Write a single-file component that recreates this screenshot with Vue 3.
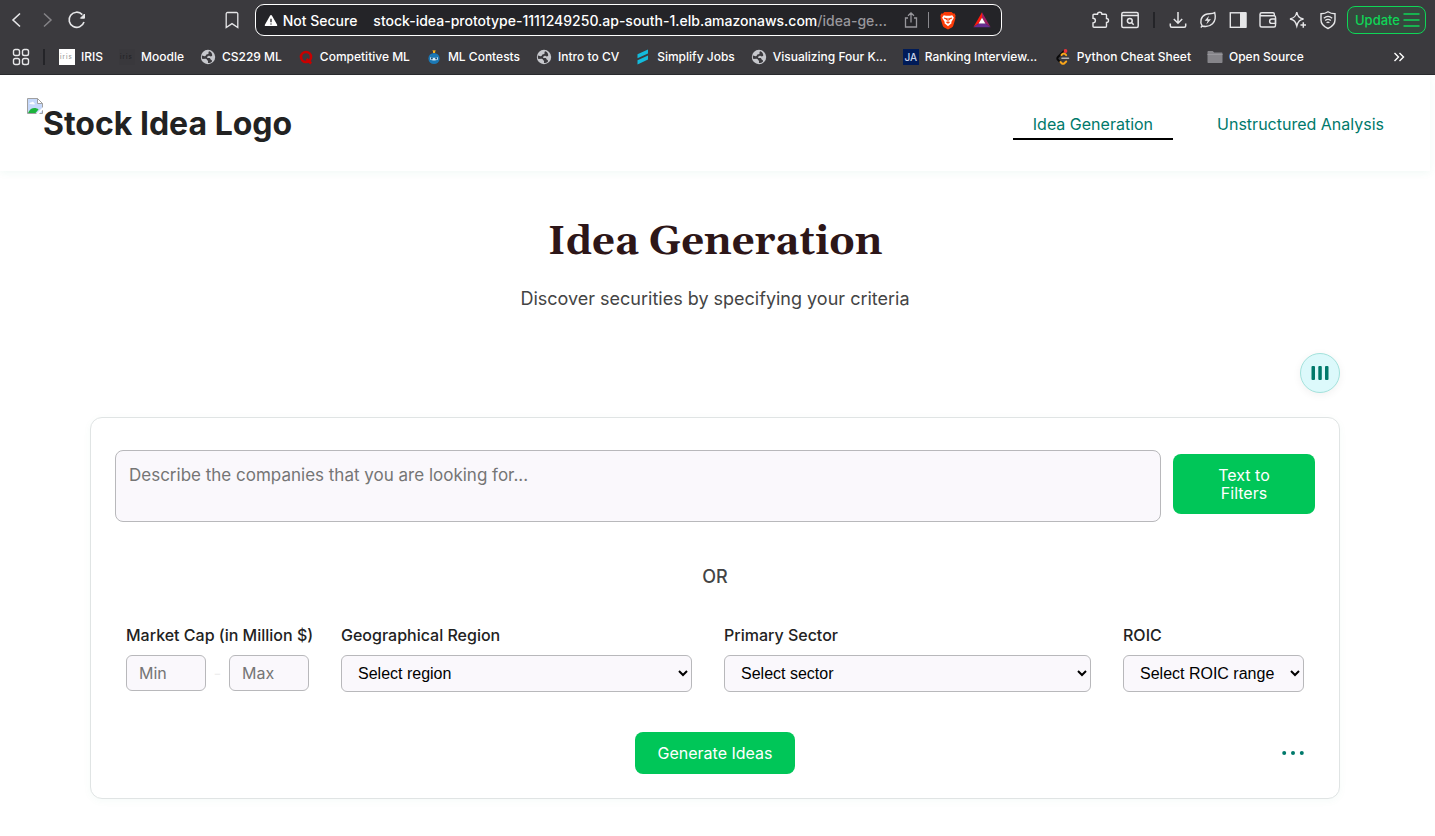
<script setup>
import { ref } from 'vue'

const bookmarks = [
  { icon: 'iris', label: 'IRIS' },
  { icon: 'moodle', label: 'Moodle' },
  { icon: 'globe', label: 'CS229 ML' },
  { icon: 'ring', label: 'Competitive ML' },
  { icon: 'robot', label: 'ML Contests' },
  { icon: 'globe', label: 'Intro to CV' },
  { icon: 'simplify', label: 'Simplify Jobs' },
  { icon: 'globe', label: 'Visualizing Four K...', cut: true },
  { icon: 'ja', label: 'Ranking Interview...', cut: true },
  { icon: 'code', label: 'Python Cheat Sheet' },
  { icon: 'folder', label: 'Open Source' },
]

const description = ref('')
const min = ref('')
const max = ref('')
const region = ref('')
const sector = ref('')
const roic = ref('')
</script>

<template>
  <div class="window">
    <div class="chrome">
      <div class="toolbar">
        <button class="tool" aria-label="Back">
          <svg viewBox="0 0 20 20"><path d="M13 3.5 6 10l7 6.5" stroke-width="1.6" /></svg>
        </button>
        <button class="tool dim" aria-label="Forward">
          <svg viewBox="0 0 20 20"><path d="m7 3.5 7 6.5-7 6.5" stroke-width="1.5" /></svg>
        </button>
        <button class="tool" aria-label="Reload">
          <svg viewBox="0 0 20 20"><path d="M15.300 4.600A7.600 7.600 0 1 0 17 12" stroke-width="1.6" /><path d="M17.500 4v4.200h-4z" fill="currentColor" /></svg>
        </button>
        <span class="space-left"></span>
        <button class="tool" aria-label="Bookmark this tab">
          <svg viewBox="0 0 20 20"><path d="M5.5 2.5h9a1.3 1.3 0 0 1 1.3 1.3v13.700L10 13.6l-5.800 3.900V3.800a1.300 1.300 0 0 1 1.300-1.300z" stroke-width="1.300" /></svg>
        </button>
        <div class="address">
          <svg class="warn" viewBox="0 0 16 14"><path d="M8 .8c.5 0 .8.200 1 .6l6 10.400c.4.800 0 1.500-.9 1.500H1.900c-.9 0-1.300-.7-.9-1.500L7 1.400c.2-.4.500-.6 1-.6z" fill="#fff" /><path d="M8 5v4M8 10.400v1.300" stroke="#242428" stroke-width="1.500" /></svg>
          <span class="secure">Not Secure</span>
          <span class="url">stock-idea-prototype-1111249250.ap-south-1.elb.amazonaws.com<i>/idea-ge...</i></span>
          <button class="tool share" aria-label="Share">
            <svg viewBox="0 0 20 20"><path d="M7 8H4.500v9h11V8H13M10 12.500V3M7 5.700 10 2.800l3 2.900" stroke-width="1.300" /></svg>
          </button>
          <span class="bar"></span>
          <svg class="brave" viewBox="0 0 18 20"><path d="M5.200 1h7.600l1.600 1.700 1.700-.2 1 2.700-.6 1.200.4 1.300-2.300 7.600c-.3 1-.8 1.600-1.600 2.100L9 19.500l-4-2.100c-.8-.5-1.300-1.100-1.600-2.100L1.100 7.700l.4-1.300-.6-1.200 1-2.700 1.700.2z" fill="#fb3b08" /><path d="m4.500 4.500 2.500.6h4l2.500-.6 1.700 2.700-2.700 4.400.2 1.400L9 16l-3.700-3 .2-1.400-2.700-4.400z" fill="#fff" /><path d="m4.800 7.400 2.900.9-.6 1.300M13.200 7.400l-2.900.9.6 1.300M9 8v3.200m-1.700.3L9 12.600l1.700-1.100" fill="none" stroke="#fb3b08" stroke-width="1.200" /></svg>
          <svg class="bat" viewBox="0 0 18 16"><path d="M9 .3V6l-3.200 5.300L.4 15.300z" fill="#ff1a0d" /><path d="M9 .3V6l3.200 5.300 5.400 4z" fill="#9e1f63" /><path d="m.4 15.300 5.400-4h6.400l5.400 4z" fill="#662d91" /><path d="m9 5.800 3.400 5.600H5.600z" fill="#fff" /></svg>
        </div>
        <span class="space-right"></span>
        <button class="tool" aria-label="Extensions">
          <svg viewBox="0 0 20 20"><path d="M7.500 4.200c0-1.200 1-2 2.200-2s2.200.8 2.200 2h3.600c.6 0 1 .4 1 1v3.300c1.200 0 2 .9 2 2s-.8 2-2 2v3.700c0 .6-.4 1-1 1H4c-.6 0-1-.4-1-1v-3.300c1.500-.1 2.400-1 2.400-2.300S4.500 8.300 3 8.300V5.200c0-.6.400-1 1-1z" stroke-width="1.400" /></svg>
        </button>
        <button class="tool" aria-label="Search in page">
          <svg viewBox="0 0 20 20"><rect x="1.800" y="2.500" width="16.400" height="15" rx="1.500" stroke-width="1.500" /><path d="M2 5.500h16M11.700 12.700l2 2" stroke-width="1.500" /><circle cx="9.800" cy="10.800" r="2.400" stroke-width="1.500" /></svg>
        </button>
        <span class="split"></span>
        <button class="tool" aria-label="Downloads">
          <svg viewBox="0 0 20 20"><path d="M10 2v11M5.800 9l4.200 4.200L14.200 9M2.300 13.500v2.300c0 .9.600 1.500 1.500 1.500h12.400c.9 0 1.500-.6 1.500-1.500v-2.300" stroke-width="1.500" /></svg>
        </button>
        <button class="tool" aria-label="Energy saver">
          <svg viewBox="0 0 20 20"><path d="M4.200 16C1.500 12 2.800 6.500 7.500 4.500c3-1.200 6.500-.2 9.200-1.800.9 3.500.7 8.300-2.200 11-3 2.900-7.600 3-10.300 2.300zm0 0-1.400 1.500" stroke-width="1.400" /><path d="m11 5.800-4.300 5h3l-1.400 3.700 4.700-5.200H9.900z" fill="currentColor" stroke="none" /></svg>
        </button>
        <button class="tool" aria-label="Sidebar">
          <svg viewBox="0 0 20 20"><rect x="2.300" y="2.800" width="15.500" height="14.500" stroke-width="1.400" /><path d="M12.500 2.800h5.500v14.500h-5.500z" fill="currentColor" /></svg>
        </button>
        <button class="tool" aria-label="Wallet">
          <svg viewBox="0 0 20 20"><path d="M16.300 5.700V4c0-.8-.5-1.300-1.300-1.300H3.800C2.600 2.700 2 3.400 2 4.300s.6 1.500 1.700 1.500h12.500c.8 0 1.300.5 1.300 1.300v8.400c0 .9-.5 1.500-1.500 1.500H3.800c-1.100 0-1.800-.7-1.800-1.800V4.300" stroke-width="1.400" /><path d="M17.500 9h-3.700a2.200 2.200 0 0 0 0 4.400h3.700z" stroke-width="1.400" /></svg>
        </button>
        <button class="tool" aria-label="Assistant">
          <svg viewBox="0 0 20 20"><path d="M8.800 2.200c.9 4.300 2.200 5.800 6.700 6.800-3.800.9-5.400 1.900-6.700 7.100C7.600 11.700 6.500 10 2 9c4.500-1 5.900-2.700 6.800-6.800z" stroke-width="1.400" /><path d="M15.300 12.300v5.500M12.500 15h5.500" stroke-width="1.500" /></svg>
        </button>
        <button class="tool" aria-label="VPN">
          <svg viewBox="0 0 20 20"><path d="M10 1.800c2.300 1.600 4.600 2 7 2V10c0 4-2.800 6.700-7 8.500C5.800 16.700 3 14 3 10V3.800c2.500 0 4.800-.4 7-2z" stroke-width="1.400" /><path d="M5.800 8.200c2.500-2.100 5.900-2.100 8.400 0M7.200 10.500c1.700-1.400 3.900-1.400 5.600 0M8.600 12.700c.9-.7 1.900-.7 2.800 0" stroke-width="1.300" /></svg>
        </button>
        <button class="update">Update
          <svg viewBox="0 0 17 16"><path d="M.5 2h16M.5 8h16M.5 14h16" stroke="currentColor" stroke-width="1.500" /></svg>
        </button>
      </div>

      <div class="bookmarks">
        <button class="apps" aria-label="All apps">
          <svg viewBox="0 0 18 18"><g fill="none" stroke="#e6e6e8" stroke-width="1.400"><rect x="1.500" y="1.500" width="6" height="6" rx="1.800" /><rect x="10.500" y="1.500" width="6" height="6" rx="1.800" /><rect x="1.500" y="10.500" width="6" height="6" rx="1.800" /><rect x="10.500" y="10.500" width="6" height="6" rx="1.800" /></g></svg>
        </button>
        <span class="split"></span>
        <a v-for="b in bookmarks" :key="b.label" href="#" class="bookmark">
          <svg viewBox="0 0 16 16">
            <template v-if="b.icon === 'iris'">
              <rect width="16" height="16" fill="#fff" /><text x="1" y="10" font-size="6" letter-spacing="1" fill="#999">iris</text>
            </template>
            <template v-else-if="b.icon === 'moodle'">
              <rect width="16" height="16" fill="#39383c" /><text x="1" y="10" font-size="6" letter-spacing="1" fill="#222226">iris</text>
            </template>
            <template v-else-if="b.icon === 'globe'">
              <circle cx="8" cy="8" r="7.200" fill="#c6c7cc" /><path d="M9.500 2.200c-1 .3-1.200.9-.9 1.700.3.900-.9 1.100-1.700 1.300C5.700 5.500 6 7.500 4.600 7.300L2 6.500c-.4 1.500 0 2.600.4 3.600l3.100-.3c1.600-.1 1.200 1.400 2.100 1.700 1 .3.100 1.600.4 2.500 1.600 0 3-.5 4-1.600.1-1-.3-1.500-1-1.700-.9-.3-.5-1.300-1.400-1.600-.9-.4-2.200.2-2.500-.7-.2-.8.6-1.300 1.300-1.500 1-.2 1.500.7 2.600.6l1.200-.8c.3-1.800-1-3.800-2.700-4.500z" fill="#3b3a3e" />
            </template>
            <template v-else-if="b.icon === 'ring'">
              <circle cx="8" cy="8" r="5" fill="none" stroke="#c80000" stroke-width="2.600" /><path d="m8.500 10 4.700 4.500" stroke="#c80000" stroke-width="2.500" />
            </template>
            <template v-else-if="b.icon === 'robot'">
              <path d="M7 2.500 6.500 1 8 1.600l1.500-.7L9 4H7z" fill="#f5b21c" /><circle cx="8" cy="9.500" r="5.600" fill="#1b78b5" /><path d="M4 8.200c2.500.8 5.500.8 8 0v2.300c-2.500 1.200-5.500 1.200-8 0z" fill="#d4edfa" /><circle cx="5.800" cy="9.500" r="1" fill="#164b73" /><circle cx="10.200" cy="9.500" r="1" fill="#164b73" />
            </template>
            <template v-else-if="b.icon === 'simplify'">
              <path d="M2.500 5.200 13 .6v4L2.500 9.300zM2.500 11.200 13 6.500v4L2.500 15.600z" fill="#13bbdc" />
            </template>
            <template v-else-if="b.icon === 'ja'">
              <rect width="16" height="16" fill="#001b58" /><text x="1.500" y="11.500" font-size="10" fill="#c9d2e8">JA</text>
            </template>
            <template v-else-if="b.icon === 'code'">
              <g fill="none" stroke-width="2" stroke-linecap="round"><path d="M8.800 2.300 3 8c-.9.900-.9 2 0 2.900l1.500 1.500" stroke="#09090a" /><path d="m5.500 13 1.200 1.200c.8.800 1.900.8 2.700 0l1.800-1.700M6.500 6l1-.9c.9-.8 1.900-.8 2.700 0l1 1" stroke="#f8a51b" /><path d="M7 9.200h6.500" stroke="#b3b3b3" stroke-width="1.600" /></g><circle cx="10.500" cy="2" r="1.900" fill="#e8333a" />
            </template>
            <template v-else>
              <path d="M.5 3c0-.7.300-1 1-1h4.200l1.500 1.400H14.500c.7 0 1 .4 1 1v8.500c0 .7-.4 1-1 1h-13c-.7 0-1-.3-1-1z" fill="#86858a" /><path d="M.5 5h15v1H.5z" fill="#98979c" />
            </template>
          </svg>
          <span :class="{ cut: b.cut }">{{ b.label }}</span>
        </a>
        <button class="more" aria-label="More bookmarks">
          <svg viewBox="0 0 12 12"><path d="m1.500 2 4 4-4 4M6.500 2l4 4-4 4" fill="none" stroke="#fff" stroke-width="1.400" /></svg>
        </button>
      </div>
    </div>

    <div class="page">
      <header class="header">
        <a href="#" class="logo">
          <svg viewBox="0 0 16 16"><path d="M.5.500h10l5 5v10H.5z" fill="#c6d9fb" stroke="#a0a0a0" /><path d="M10.500.500v5h5z" fill="#fff" stroke="#a0a0a0" /><path d="M2.500 6c0-1.200 1-1.700 1.800-1.400.6-1.300 2.500-.9 2.600.4 1 0 1.200 1 .6 1.400z" fill="#fff" /><path d="M1 15c1.500-3.700 4-5 6.500-5 1.500 0 3 .5 4 1.500L8.500 15z" fill="#1cb43c" /><path d="m9 16 7-7v2.800L12 16z" fill="#fff" /></svg>
          <span>Stock Idea Logo</span>
        </a>
        <nav class="nav">
          <a href="#" class="active">Idea Generation</a>
          <a href="#">Unstructured Analysis</a>
        </nav>
      </header>

      <main class="main">
        <h1>Idea Generation</h1>
        <p class="subtitle">Discover securities by specifying your criteria</p>
        <div class="view-row">
          <button class="columns" aria-label="Choose columns">
            <svg viewBox="0 0 18 16"><g fill="#00796b"><rect x=".5" y="1" width="3.500" height="14" rx="1" /><rect x="7.300" y="1" width="3.500" height="14" rx="1" /><rect x="14" y="1" width="3.500" height="14" rx="1" /></g></svg>
          </button>
        </div>

        <form class="card" @submit.prevent>
          <div class="describe">
            <textarea v-model="description" aria-label="Company description" placeholder="Describe the companies that you are looking for..."></textarea>
            <button type="button" class="green">Text to Filters</button>
          </div>
          <p class="or">OR</p>
          <div class="filters">
            <div class="field">
              <label for="min">Market Cap (in Million $)</label>
              <div class="range">
                <input id="min" v-model="min" placeholder="Min">
                <span>-</span>
                <input v-model="max" aria-label="Maximum market cap" placeholder="Max">
              </div>
            </div>
            <div class="field">
              <label for="region">Geographical Region</label>
              <select id="region" v-model="region"><option value="">Select region</option></select>
            </div>
            <div class="field">
              <label for="sector">Primary Sector</label>
              <select id="sector" v-model="sector"><option value="">Select sector</option></select>
            </div>
            <div class="field">
              <label for="roic">ROIC</label>
              <select id="roic" v-model="roic"><option value="">Select ROIC range</option></select>
            </div>
          </div>
          <div class="actions">
            <button type="submit" class="green generate">Generate Ideas</button>
            <button type="button" class="dots" aria-label="More options">
              <svg viewBox="0 0 22 6"><g fill="#00796b"><circle cx="2.200" cy="3" r="2" /><circle cx="11" cy="3" r="2" /><circle cx="19.800" cy="3" r="2" /></g></svg>
            </button>
          </div>
        </form>
      </main>
    </div>
  </div>
</template>

<style>
body {
  margin: 0;
  background: #fff;
}
</style>

<style scoped>
* {
  box-sizing: border-box;
}

.window {
  font-family: Inter, "Liberation Sans", sans-serif;
  color: #222;
}

button {
  margin: 0;
  padding: 0;
  border: 0;
  background: none;
  font-family: inherit;
  cursor: pointer;
}

a {
  text-decoration: none;
}

svg {
  display: block;
  flex: none;
}

.chrome {
  background: #3b3a3e;
  border-bottom: 1px solid #2a292d;
  color: #fff;
}

.toolbar {
  display: flex;
  align-items: center;
  height: 40px;
  padding: 0 9px 0 2px;
}

.tool {
  display: grid;
  place-items: center;
  flex: none;
  width: 30px;
  height: 30px;
  color: #e6e6e8;
}

.tool svg {
  width: 20px;
  height: 20px;
  fill: none;
  stroke: currentColor;
}

.tool.dim {
  color: #858488;
}

.space-left {
  flex: 12 1 0;
}

.space-right {
  flex: 8 1 0;
}

.address {
  display: flex;
  align-items: center;
  flex: 70 1 0;
  min-width: 0;
  height: 32px;
  margin-left: 8px;
  padding: 0 10px 0 8px;
  border: 1px solid #fff;
  border-radius: 9px;
  background: #242428;
  font-size: 14px;
  font-weight: 500;
  white-space: nowrap;
}

.warn {
  width: 14px;
  height: 13px;
}

.secure {
  margin: 0 16px 0 5px;
}

.url {
  flex: 1;
  min-width: 0;
  overflow: hidden;
}

.url i {
  color: #98979c;
  font-style: normal;
}

.share {
  color: #98979c;
}

.bar {
  width: 1px;
  height: 16px;
  margin: 0 10px 0 2px;
  background: #8a898e;
}

.brave {
  width: 18px;
  height: 19px;
  margin-right: 16px;
}

.bat {
  width: 18px;
  height: 16px;
}

.split {
  flex: none;
  width: 2px;
  height: 16px;
  margin: 0 8px;
  background: #242428;
}

.update {
  display: flex;
  align-items: center;
  gap: 3px;
  height: 28px;
  margin-left: 4px;
  padding: 0 5px 0 7px;
  border: 1px solid #0fd657;
  border-radius: 8px;
  background: #36483e;
  color: #0fd657;
  font-size: 13px;
  font-weight: 500;
}

.update svg {
  width: 17px;
  height: 16px;
}

.bookmarks {
  display: flex;
  align-items: center;
  height: 34px;
  padding: 0 30px 0 12px;
}

.apps {
  margin-right: 4px;
}

.apps svg {
  width: 18px;
  height: 18px;
}

.bookmarks .split {
  margin: 0 14px 0 9px;
}

.bookmark {
  display: flex;
  align-items: center;
  gap: 6px;
  margin-right: 16px;
  color: #fff;
  font-size: 12px;
  font-weight: 500;
  line-height: 16px;
  white-space: nowrap;
}

.bookmark svg {
  width: 16px;
  height: 16px;
}

.bookmark .cut {
  width: 114px;
}

.more {
  margin-left: auto;
}

.more svg {
  width: 12px;
  height: 12px;
}

.page {
  padding-right: 5px;
}

.header {
  display: flex;
  align-items: center;
  justify-content: space-between;
  height: 96px;
  padding: 2px 26px 0 27px;
  box-shadow: 0 2px 8px rgba(0, 150, 110, 0.06);
}

.logo {
  display: flex;
  align-items: flex-start;
  color: #222;
  font-size: 32px;
  font-weight: 700;
  line-height: 52px;
}

.logo svg {
  width: 16px;
  height: 16px;
}

.nav {
  display: flex;
  gap: 24px;
}

.nav a {
  padding: 6px 20px 4px;
  border-bottom: 2px solid transparent;
  color: #00796b;
  font-size: 16px;
  line-height: 20px;
}

.nav .active {
  border-color: #000;
}

.main {
  max-width: 1250px;
  margin: 0 auto;
  padding: 42px 0 36px;
}

h1 {
  margin: 0;
  color: #2d1618;
  font-family: Georgia, Gelasio, "Liberation Serif", serif;
  font-size: 40px;
  font-weight: 700;
  line-height: 60px;
  text-align: center;
}

.subtitle {
  margin: 12px 0 40px;
  color: #444;
  font-size: 18px;
  line-height: 28px;
  text-align: center;
}

.view-row {
  display: flex;
  justify-content: flex-end;
  margin-bottom: 24px;
}

.columns {
  display: grid;
  place-items: center;
  width: 40px;
  height: 40px;
  border: 1px solid #a3e2dc;
  border-radius: 50%;
  background: #dcf9fb;
  box-shadow: 0 2px 8px rgba(0, 0, 0, 0.06);
}

.columns svg {
  width: 18px;
  height: 16px;
}

.card {
  padding: 32px 24px 24px;
  border: 1px solid #e0e4e4;
  border-radius: 12px;
  background: #fff;
  box-shadow: 0 2px 8px rgba(0, 150, 110, 0.04);
}

.describe {
  display: flex;
  gap: 12px;
}

textarea {
  flex: 1;
  min-width: 0;
  height: 72px;
  padding: 12px 13px;
  border: 1px solid #b8b8bb;
  border-radius: 8px;
  background: #faf8fc;
  font-family: inherit;
  font-size: 17px;
  line-height: 24px;
  resize: none;
}

::placeholder {
  color: #757575;
}

.green {
  border-radius: 8px;
  background: #00c658;
  color: #fff;
  font-size: 16px;
  line-height: 18px;
}

.describe .green {
  width: 142px;
  height: 60px;
  margin-top: 4px;
  padding: 0 40px;
}

.or {
  margin: 41px 0 34px;
  color: #444;
  font-size: 18px;
  font-weight: 500;
  line-height: 28px;
  text-align: center;
}

.filters {
  display: grid;
  grid-template-columns: 183px 351fr 367fr 181px;
  gap: 32px;
  padding: 0 11px;
}

.field {
  display: flex;
  flex-direction: column;
  gap: 10px;
}

label {
  font-size: 16px;
  font-weight: 500;
  line-height: 20px;
  white-space: nowrap;
}

.range {
  display: flex;
  align-items: center;
  justify-content: space-between;
  color: #eee;
}

.range input {
  width: 80px;
  height: 36px;
  padding: 0 12px;
  border: 1px solid #b8b8bb;
  border-radius: 6px;
  background: #faf8fc;
  font-family: inherit;
  font-size: 16px;
}

select {
  width: 100%;
  height: 37px;
  padding: 0 0 0 12px;
  border: 1px solid #b8b8bb;
  border-radius: 6px;
  background: #faf8fc;
  color: #000;
  font-family: "Liberation Sans", Arial, sans-serif;
  font-size: 16px;
}

.actions {
  display: grid;
  grid-template-columns: 1fr auto 1fr;
  align-items: center;
  margin-top: 40px;
  padding: 0 11px;
}

.generate {
  grid-column: 2;
  height: 42px;
  padding: 0 23px;
}

.dots {
  justify-self: end;
}

.dots svg {
  width: 22px;
  height: 6px;
}
</style>
